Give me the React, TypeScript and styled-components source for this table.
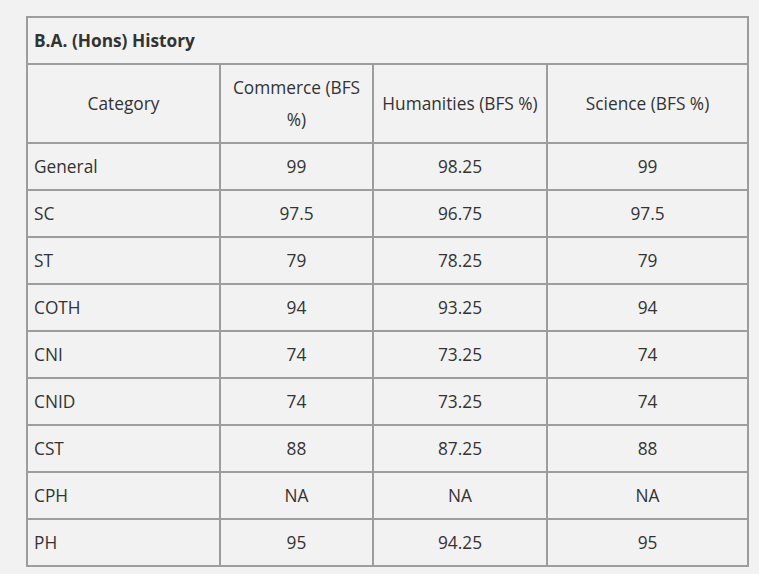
import React from "react";
import styled, { createGlobalStyle } from "styled-components";

const Global = createGlobalStyle`
  html, body { margin: 0; padding: 0; background: #f2f2f2; }
  body { font-family: "Open Sans", "Noto Sans", sans-serif; color: #333; }
`;

const Page = styled.div`
  padding: 16px 12px 8px 26px;
`;

const Table = styled.table`
  border-collapse: collapse;
  table-layout: fixed;
  width: 721px;
  font-size: 17.3px;
  line-height: 32px;
  color: #333;
  border: 2px solid #9d9d9d;
`;

const Cell = styled.td<{ $align?: "left" | "center"; $bold?: boolean }>`
  border: 2px solid #9d9d9d;
  padding: 6.5px 6px;
  text-align: ${(p) => p.$align ?? "center"};
  font-weight: ${(p) => (p.$bold ? 700 : 400)};
  vertical-align: middle;
`;

const cols = [193, 153, 174, 201];

const rows: [string, string, string, string][] = [
  ["General", "99", "98.25", "99"],
  ["SC", "97.5", "96.75", "97.5"],
  ["ST", "79", "78.25", "79"],
  ["COTH", "94", "93.25", "94"],
  ["CNI", "74", "73.25", "74"],
  ["CNID", "74", "73.25", "74"],
  ["CST", "88", "87.25", "88"],
  ["CPH", "NA", "NA", "NA"],
  ["PH", "95", "94.25", "95"],
];

export default function App() {
  return (
    <Page>
      <Global />
      <Table>
        <colgroup>
          {cols.map((w, i) => (
            <col key={i} style={{ width: w }} />
          ))}
        </colgroup>
        <tbody>
          <tr>
            <Cell colSpan={4} $align="left" $bold>
              B.A. (Hons) History
            </Cell>
          </tr>
          <tr>
            <Cell>Category</Cell>
            <Cell>Commerce (BFS %)</Cell>
            <Cell>Humanities (BFS %)</Cell>
            <Cell>Science (BFS %)</Cell>
          </tr>
          {rows.map((r) => (
            <tr key={r[0]}>
              <Cell $align="left">{r[0]}</Cell>
              <Cell>{r[1]}</Cell>
              <Cell>{r[2]}</Cell>
              <Cell>{r[3]}</Cell>
            </tr>
          ))}
        </tbody>
      </Table>
    </Page>
  );
}
